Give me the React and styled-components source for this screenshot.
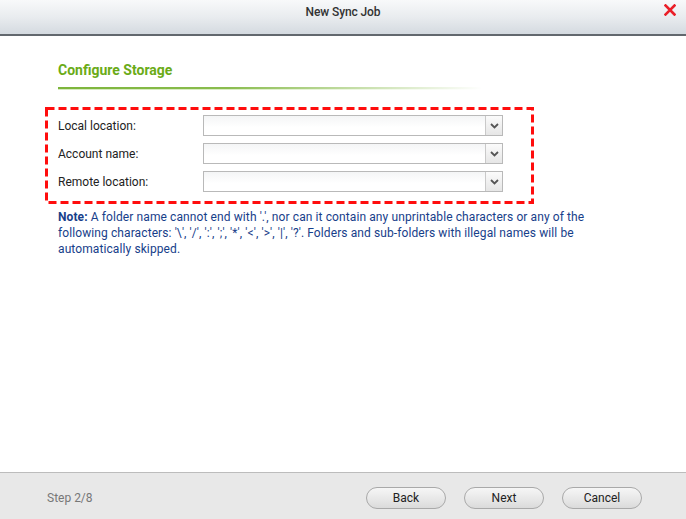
import React from "react";
import styled, { createGlobalStyle } from "styled-components";

const Global = createGlobalStyle`
  html, body { margin: 0; padding: 0; background: #fff; }
  body { font-family: Roboto, "Liberation Sans", Arial, sans-serif; }
  * { box-sizing: border-box; }
`;

const Window = styled.div`
  width: 686px;
  height: 519px;
  display: flex;
  flex-direction: column;
  background: #fff;
  overflow: hidden;
`;

const TitleBar = styled.div`
  height: 36px;
  flex: none;
  position: relative;
  display: flex;
  align-items: center;
  justify-content: center;
  background: linear-gradient(to bottom, #f8f9fa 0%, #e9ecef 50%, #d4dae0 100%);
  border-bottom: 2px solid #62686e;
  padding-bottom: 11px;
`;

const Title = styled.div`
  font-size: 12px;
  color: #333;
  font-weight: 500;
  letter-spacing: -0.1px;
`;

const Close = styled.button`
  position: absolute;
  right: 10px;
  top: 4px;
  width: 12px;
  height: 12px;
  padding: 0;
  border: 0;
  background: none;
  display: flex;
`;

const Content = styled.div`
  flex: 1;
  padding: 26px 0 0 58px;
  display: flex;
  flex-direction: column;
`;

const Heading = styled.h2`
  margin: 0;
  font-size: 14px;
  line-height: 16px;
  font-weight: 700;
  color: #6aab17;
`;

const Underline = styled.div`
  margin-top: 9px;
  width: 424px;
  height: 3px;
  background:
    linear-gradient(to right, rgba(255,255,255,0) 0%, rgba(255,255,255,0.1) 40%, #fff 100%),
    linear-gradient(to bottom, #7db53b 0 2px, #d7ebbf 2px 3px);
`;

const HighlightBox = styled.div`
  position: relative;
  margin: 17px 0 0 -13px;
  width: 489px;
  height: 97px;
  padding: 8px 0 0 13px;
  display: flex;
  flex-direction: column;
  gap: 7px;
`;

const DashFrame = styled.svg`
  position: absolute;
  left: 0;
  top: 0;
  width: 100%;
  height: 100%;
  pointer-events: none;
  overflow: visible;
`;

const Row = styled.div`
  display: flex;
  align-items: center;
  height: 21px;
`;

const Label = styled.label`
  width: 145px;
  font-size: 12px;
  color: #222;
`;

const Select = styled.div`
  width: 300px;
  height: 21px;
  border: 1px solid #b9b9b9;
  background: linear-gradient(to bottom, #f4f5f6 0%, #ffffff 60%);
  display: flex;
  justify-content: flex-end;
`;

const Arrow = styled.div`
  width: 17px;
  height: 100%;
  border-left: 1px solid #c9c9c9;
  background: linear-gradient(to bottom, #fbfbfb, #e6e6e6);
  display: flex;
  align-items: center;
  justify-content: center;
`;

const Note = styled.p`
  margin: 5px 0 0;
  width: 550px;
  font-size: 12px;
  line-height: 16px;
  letter-spacing: 0.1px;
  color: #17408a;
  & b { font-weight: 700; }
`;

const Footer = styled.div`
  height: 47px;
  flex: none;
  border-top: 1px solid #bcbcbc;
  background: #e8e8e8;
  display: flex;
  align-items: center;
  padding: 3px 44px 0 47px;
`;

const Step = styled.div`
  flex: 1;
  font-size: 12px;
  color: #777;
`;

const Buttons = styled.div`
  display: flex;
  gap: 18px;
`;

const Btn = styled.button`
  width: 80px;
  height: 22px;
  border-radius: 11px;
  border: 1px solid #a9a9a9;
  background: linear-gradient(to bottom, #f6f6f6 0%, #e6e6e6 60%, #dadada 100%);
  font-family: Roboto, "Liberation Sans", Arial, sans-serif;
  font-size: 12px;
  color: #222;
  padding: 0;
`;

const ChevronDown = () => (
  <svg width="9" height="6" viewBox="0 0 9 6">
    <path d="M1 1 L4.5 4.5 L8 1" fill="none" stroke="#555" strokeWidth="1.8" />
  </svg>
);

const fields = ["Local location:", "Account name:", "Remote location:"];

export default function App() {
  return (
    <Window>
      <Global />
      <TitleBar>
        <Title>New Sync Job</Title>
        <Close aria-label="Close">
          <svg width="12" height="12" viewBox="0 0 12 12">
            <path d="M1.5 1.5 L10.5 10.5 M10.5 1.5 L1.5 10.5" stroke="#ea1f28" strokeWidth="2.6" strokeLinecap="square" />
          </svg>
        </Close>
      </TitleBar>
      <Content>
        <Heading>Configure Storage</Heading>
        <Underline />
        <HighlightBox>
          <DashFrame>
            <rect x="1.5" y="1.5" width="486" height="94" fill="none" stroke="#ff0d0d" strokeWidth="3" strokeDasharray="8 4" />
          </DashFrame>
          {fields.map((f) => (
            <Row key={f}>
              <Label>{f}</Label>
              <Select>
                <Arrow>
                  <ChevronDown />
                </Arrow>
              </Select>
            </Row>
          ))}
        </HighlightBox>
        <Note>
          <b>Note:</b> A folder name cannot end with '.', nor can it contain any unprintable characters or any of the
          following characters: '\', '/', ':', ';', '*', '&lt;', '&gt;', '|', '?'. Folders and sub-folders with illegal names will be
          automatically skipped.
        </Note>
      </Content>
      <Footer>
        <Step>Step 2/8</Step>
        <Buttons>
          <Btn>Back</Btn>
          <Btn>Next</Btn>
          <Btn>Cancel</Btn>
        </Buttons>
      </Footer>
    </Window>
  );
}
